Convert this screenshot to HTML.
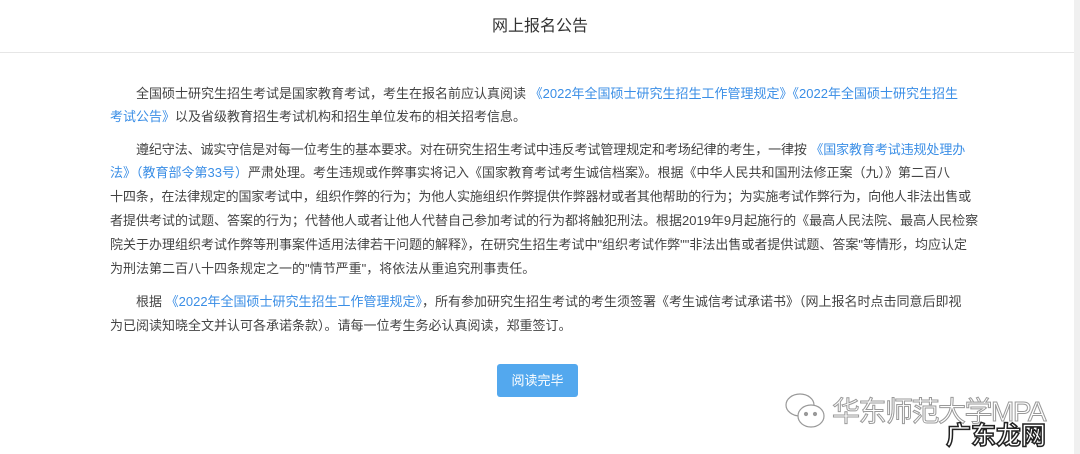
<!DOCTYPE html><html><head><meta charset="utf-8"><style>
body{margin:0;width:1080px;height:454px;background:#fff;font-family:"Liberation Sans","Noto Sans CJK SC",sans-serif;position:relative;overflow:hidden}
.t{position:absolute;top:14px;left:0;width:1080px;text-align:center;font-size:16px;color:#333;line-height:26px}
.hr{position:absolute;top:52px;left:0;width:1074px;height:1px;background:#e6e6e6}
.rs{position:absolute;top:0;right:0;width:6px;height:454px;background:#f0f0f0}
.l{position:absolute;left:110px;font-size:13px;color:#444;white-space:nowrap;line-height:16px}
.a{color:#3a8ee6}
.btn{position:absolute;left:497px;top:364px;width:81px;height:33px;background:#53a8ee;border-radius:3px;color:#fff;font-size:13px;text-align:center;line-height:33px}
.wm{position:absolute;left:832px;top:394px;font-size:28px;line-height:36px;color:#fff;-webkit-text-stroke:1px #999;white-space:nowrap;letter-spacing:-1.5px}
.wm2{position:absolute;left:946px;top:420px;font-size:25px;line-height:32px;font-weight:bold;color:#fff;-webkit-text-stroke:1.5px #222;white-space:nowrap}
</style></head><body>
<div class="t">网上报名公告</div><div class="hr"></div><div class="rs"></div>
<div class="l" style="top:86px;left:136px">全国硕士研究生招生考试是国家教育考试，考生在报名前应认真阅读 <span class="a">《2022年全国硕士研究生招生工作管理规定》《2022年全国硕士研究生招生</span></div>
<div class="l" style="top:109px"><span class="a">考试公告》</span>以及省级教育招生考试机构和招生单位发布的相关招考信息。</div>
<div class="l" style="top:142px;left:136px;letter-spacing:-0.1px">遵纪守法、诚实守信是对每一位考生的基本要求。对在研究生招生考试中违反考试管理规定和考场纪律的考生，一律按 <span class="a">《国家教育考试违规处理办</span></div>
<div class="l" style="top:165px"><span class="a">法》（教育部令第33号）</span>严肃处理。考生违规或作弊事实将记入《国家教育考试考生诚信档案》。根据《中华人民共和国刑法修正案（九）》第二百八</div>
<div class="l" style="top:189px;letter-spacing:-0.15px">十四条，在法律规定的国家考试中，组织作弊的行为；为他人实施组织作弊提供作弊器材或者其他帮助的行为；为实施考试作弊行为，向他人非法出售或</div>
<div class="l" style="top:213px">者提供考试的试题、答案的行为；代替他人或者让他人代替自己参加考试的行为都将触犯刑法。根据2019年9月起施行的《最高人民法院、最高人民检察</div>
<div class="l" style="top:237px">院关于办理组织考试作弊等刑事案件适用法律若干问题的解释》，在研究生招生考试中"组织考试作弊""非法出售或者提供试题、答案"等情形，均应认定</div>
<div class="l" style="top:261px">为刑法第二百八十四条规定之一的"情节严重"，将依法从重追究刑事责任。</div>
<div class="l" style="top:294px;left:136px">根据 <span class="a">《2022年全国硕士研究生招生工作管理规定》</span>，所有参加研究生招生考试的考生须签署《考生诚信考试承诺书》（网上报名时点击同意后即视</div>
<div class="l" style="top:318px">为已阅读知晓全文并认可各承诺条款）。请每一位考生务必认真阅读，郑重签订。</div>
<div class="btn">阅读完毕</div>
<svg style="position:absolute;left:784px;top:390px" width="44" height="44" viewBox="0 0 44 44" fill="#fff" stroke="#999" stroke-width="1.2"><ellipse cx="16" cy="15" rx="14" ry="11"/><ellipse cx="27" cy="26" rx="13" ry="11"/><circle cx="22" cy="24" r="1.5" fill="#999"/><circle cx="31" cy="24" r="1.5" fill="#999"/></svg>
<div class="wm">华东师范大学MPA</div>
<div class="wm2">广东龙网</div>
</body></html>
